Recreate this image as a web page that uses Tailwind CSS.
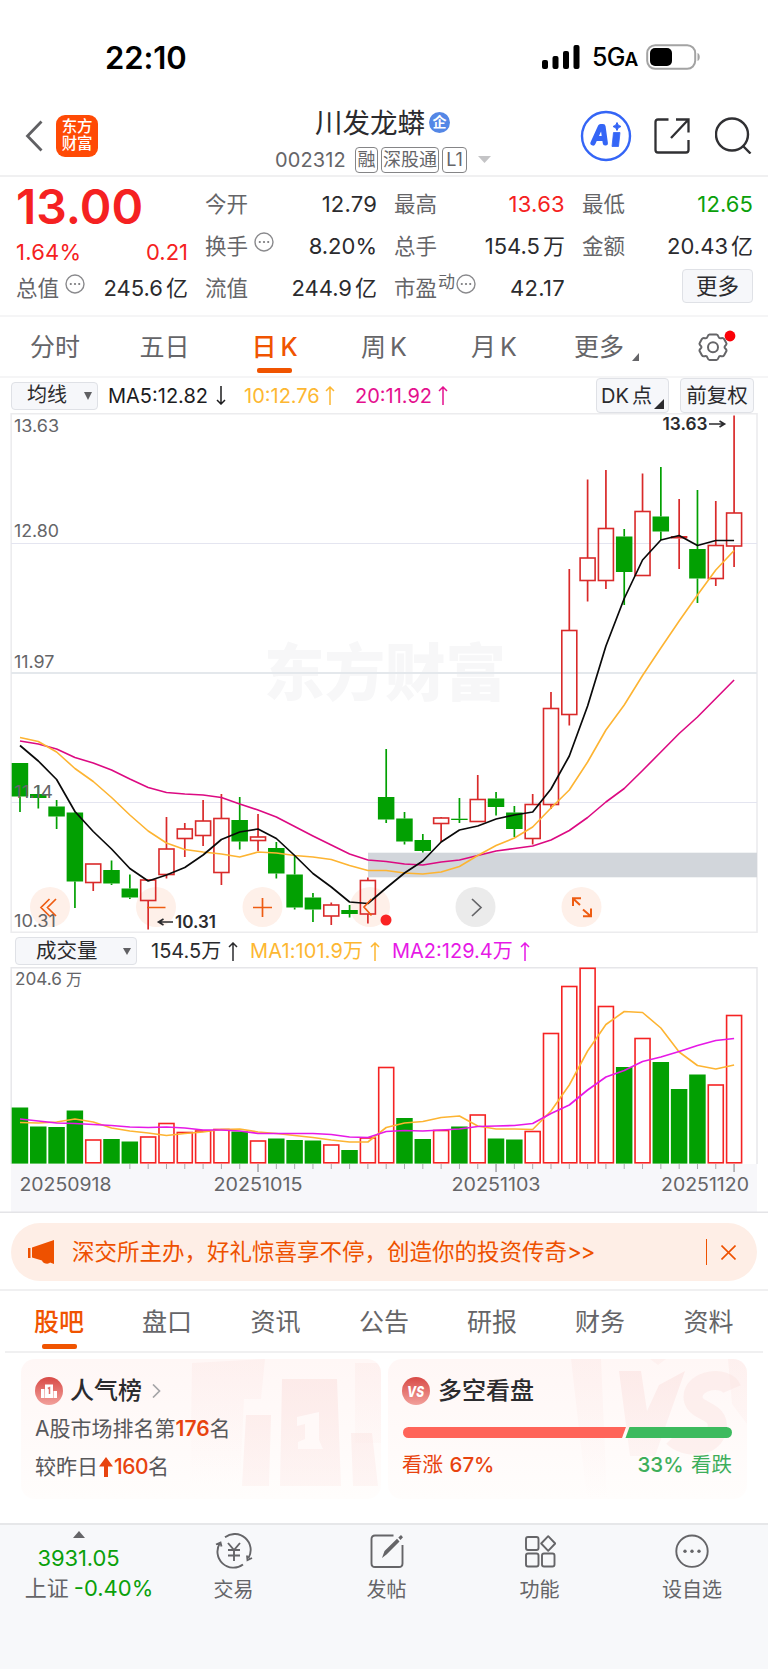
<!DOCTYPE html>
<html lang="zh-CN">
<head>
<meta charset="utf-8">
<title>川发龙蟒 002312</title>
<script src="https://cdn.jsdelivr.net/npm/@tailwindcss/browser@4"></script>
</head>
<body class="bg-white w-[768px] h-[1669px] overflow-hidden font-['Inter','Noto_Sans_CJK_SC',sans-serif] text-[#2b2b2e] whitespace-nowrap">

<!-- status bar -->
<div class="h-[94px] pt-[20px] flex items-center pl-[105px] pr-[67px] justify-between">
  <span class="text-[31px] font-semibold text-black leading-none tracking-[-0.1px]">22:10</span>
  <div class="flex items-center">
    <svg class="w-[38px] h-[24px]" viewBox="0 0 38 24"><rect x="0" y="15" width="6" height="9" rx="2"/><rect x="10.5" y="11" width="6" height="13" rx="2"/><rect x="21" y="6" width="6" height="18" rx="2"/><rect x="31.5" y="0" width="6" height="24" rx="2"/></svg>
    <span class="ml-[12px] w-[43px] text-[25px] font-medium text-black leading-none tracking-[-0.8px]">5G<span class="text-[19px] font-semibold">A</span></span>
    <svg class="ml-[11px] w-[55px] h-[26px]" viewBox="0 0 55 26"><rect x="1.2" y="1.2" width="48" height="23.6" rx="8" fill="none" stroke="#a3a3a3" stroke-width="2"/><rect x="4" y="4" width="22" height="18" rx="5"/><path d="M51.5 9v8c3-1 3-7 0-8z" fill="#a3a3a3"/></svg>
  </div>
</div>

<!-- title bar -->
<div class="h-[83px] pt-[2px] flex items-center border-b-2 border-[#f0f0f1]">
  <svg class="ml-[25px] w-[18px] h-[32px]" viewBox="0 0 18 32" fill="none" stroke="#606063" stroke-width="2.8"><path d="M16.5 1.500 2.500 16 16.500 30.500"/></svg>
  <div class="ml-[13px] w-[42px] h-[42px] rounded-[9px] bg-[#ff4a05] text-white text-[15.500px] font-medium leading-[17px] text-center pt-[3px] tracking-[-0.3px]">东方<br>财富</div>
  <div class="ml-[177px] mt-[12px] w-[217px] h-[72px] flex flex-col">
    <div class="ml-[40px] flex items-center h-[34px]">
      <span class="text-[27.500px] leading-[34px]">川发龙蟒</span>
      <span class="ml-[4px] w-[21px] h-[21px] rounded-full bg-[#5487e6] text-white text-[14px] font-bold leading-[20px] text-center">企</span>
    </div>
    <div class="flex items-center text-[#656568] mt-[6px] leading-none h-[28px]">
      <span class="text-[20px] w-[80px] tracking-[0.1px]">002312</span>
      <span class="w-[23px] h-[26px] border border-[#858587] rounded-[4px] text-[18px] leading-[23px] text-center">融</span>
      <span class="ml-[3px] w-[58px] h-[26px] border border-[#858587] rounded-[4px] text-[18px] leading-[23px] text-center">深股通</span>
      <span class="ml-[3px] w-[25px] h-[26px] border border-[#858587] rounded-[4px] text-[18px] leading-[24px] text-center">L1</span>
      <svg class="ml-[11px] w-[13px] h-[7px]" viewBox="0 0 13 7"><path d="M0 0h13L6.500 7z" fill="#c4c4c6"/></svg>
    </div>
  </div>
  <svg class="ml-[88px] w-[52px] h-[52px]" viewBox="0 0 52 52"><circle cx="26" cy="26" r="24" fill="none" stroke="#3465f6" stroke-width="2.400"/><g fill="none" stroke="#3465f6" stroke-width="5.200" stroke-linecap="round" stroke-linejoin="round"><path d="M13 33 20.500 16.500h2.500L25.300 33M17 28.500h7"/></g><path d="M33.500 22.500h6.500l-1.500 14h-6.500z" fill="#3465f6" stroke="#3465f6" stroke-width=".8" stroke-linejoin="round"/><path d="M37 12.500l1.300 2.700 2.700 1.300-2.700 1.300-1.300 2.700-1.300-2.700-2.700-1.300 2.700-1.300z" fill="#3465f6" stroke="#3465f6" stroke-width="1"/></svg>
  <svg class="ml-[22px] w-[36px] h-[36px]" viewBox="0 0 36 36" fill="none" stroke="#303033" stroke-width="2.300"><path d="M14.500 1.500H4Q1.500 1.500 1.500 4v28q0 2.500 2.500 2.500h28q2.500 0 2.500-2.500V22M17 20 34 2M22 1.500h12.500V14.500"/></svg>
  <svg class="ml-[25px] w-[37px] h-[37px]" viewBox="0 0 37 37" fill="none" stroke="#303033" stroke-width="2.400"><circle cx="17" cy="17.500" r="16"/><path d="M28 29l7.500 7.500"/></svg>
</div>

<!-- quote figures -->
<div class="h-[140px] border-b-2 border-[#f5f5f6] pl-[16px] pr-[15px] grid grid-cols-[172px_172px_171px_171px] gap-x-[17px] text-[22px] leading-[42px]">
  <div>
    <div class="h-[54px] pt-[6px] leading-[48px] text-[48px] font-semibold text-[#f52121]">13.00</div>
    <div class="flex justify-between h-[36px] leading-[43px] text-[#f52121]"><span class="tracking-[0.2px]">1.64%</span><span>0.21</span></div>
    <div class="flex justify-between"><span class="text-[#656568] flex text-[21.500px]">总值<svg class="ml-[6px] mt-[7px] w-[20px] h-[20px]" viewBox="0 0 20 20"><use href="#dots"/></svg></span><span>245.6<span class="ml-[3px]">亿</span></span></div>
  </div>
  <div class="pt-[6px]">
    <div class="flex justify-between"><span class="text-[#656568] text-[21.500px]">今开</span><span class="tracking-[0.2px]">12.79</span></div>
    <div class="flex justify-between"><span class="text-[#656568] flex text-[21.500px]">换手<svg class="ml-[6px] mt-[7px] w-[20px] h-[20px]" viewBox="0 0 20 20"><use href="#dots"/></svg></span><span>8.20%</span></div>
    <div class="flex justify-between"><span class="text-[#656568] text-[21.500px]">流值</span><span>244.9<span class="ml-[3px]">亿</span></span></div>
  </div>
  <div class="pt-[6px]">
    <div class="flex justify-between"><span class="text-[#656568] text-[21.500px]">最高</span><span class="text-[#f52121] tracking-[0.3px]">13.63</span></div>
    <div class="flex justify-between"><span class="text-[#656568] text-[21.500px]">总手</span><span>154.5<span class="ml-[3px]">万</span></span></div>
    <div class="flex justify-between"><span class="text-[#656568] flex text-[21.500px]">市盈<span class="text-[17px] leading-[30px] ml-[1px]">动</span><svg class="ml-px mt-[7px] w-[20px] h-[20px]" viewBox="0 0 20 20"><use href="#dots"/></svg></span><span class="tracking-[0.3px]">42.17</span></div>
  </div>
  <div class="pt-[6px]">
    <div class="flex justify-between"><span class="text-[#656568] text-[21.500px]">最低</span><span class="text-[#0aa00a] tracking-[0.1px]">12.65</span></div>
    <div class="flex justify-between"><span class="text-[#656568] text-[21.500px]">金额</span><span>20.43<span class="ml-[3px]">亿</span></span></div>
    <div class="flex justify-end pt-[2px]"><span class="w-[71px] h-[34px] rounded-[4px] border border-[#dfe1e6] bg-[#f6f7fa] text-center leading-[33px] text-[21.500px]">更多</span></div>
  </div>
</div>
<svg class="hidden"><defs><g id="dots"><circle cx="10" cy="10" r="9" fill="none" stroke="#8a8a8d" stroke-width="1.400"/><circle cx="5.800" cy="10" r="1.100" fill="#77777a"/><circle cx="10" cy="10" r="1.100" fill="#77777a"/><circle cx="14.200" cy="10" r="1.100" fill="#77777a"/></g></defs></svg>

<!-- period tabs -->
<div class="h-[61px] border-b-2 border-[#f5f5f6] flex text-[25px] leading-[60px] text-[#656568]">
  <span class="w-[110px] text-center">分时</span>
  <span class="w-[109px] text-center">五日</span>
  <span class="w-[111px] flex flex-col items-center text-[#f05400]"><span class="h-[51px] font-medium">日<span class="ml-1">K</span></span><span class="w-[35px] h-[5px] rounded-[2px] bg-[#f05400]"></span></span>
  <span class="w-[108px] text-center">周<span class="ml-1">K</span></span>
  <span class="w-[112px] text-center">月<span class="ml-1">K</span></span>
  <span class="w-[98px] text-center">更多</span>
  <svg class="-ml-[16px] mt-[36px] w-[7px] h-[8px]" viewBox="0 0 7 8"><path d="M7 0v8H0z" fill="#656568"/></svg>
  <svg class="ml-[59px] mt-[13px] w-[40px] h-[34px]" viewBox="0 0 40 34"><path fill="none" stroke="#656568" stroke-width="2" stroke-linejoin="round" d="M11.500 4.500h7c1.200 0 1.600 1 2 2.200s1.500 1.800 2.700 1.500c1.300-.3 2.300-.2 2.900.9l2.200 4c.6 1-.1 1.900-1 2.700-1 .9-1 1.900 0 2.800.9.800 1.600 1.700 1 2.700l-2.200 4c-.6 1.100-1.600 1.200-2.900.9-1.200-.3-2.300.3-2.700 1.500s-.8 2.200-2 2.200h-7c-1.200 0-1.600-1-2-2.200s-1.500-1.800-2.700-1.500c-1.300.3-2.300.2-2.900-.9l-2.200-4c-.6-1 .1-1.900 1-2.700 1-.9 1-1.900 0-2.800-.9-.8-1.600-1.700-1-2.700l2.200-4c.6-1.100 1.600-1.200 2.900-.9 1.200.3 2.300-.3 2.700-1.500s.8-2.200 2-2.200z"/><circle cx="15" cy="17.200" r="5" fill="none" stroke="#656568" stroke-width="2"/><circle cx="32" cy="6" r="5.400" fill="#fb0007"/></svg>
</div>

<!-- moving average legend -->
<div class="h-[35px] flex items-center pl-[11px] pr-[14px] text-[20px] leading-none">
  <div class="w-[87px] h-[28px] rounded-[4px] border border-[#dfe1e6] bg-[#f6f7fa] flex items-center pl-[15px]"><span class="leading-[24px] pb-px">均线</span><svg class="ml-[17px] w-[8px] h-[8px]" viewBox="0 0 8 8"><path d="M0 0h8L4 8z" fill="#606063"/></svg></div>
  <span class="ml-[10px] w-[108px] text-[#1c1c1e]">MA5:12.82</span><svg class="w-[10px] h-[19px]" viewBox="0 0 10 19" fill="none" stroke="#1c1c1e" stroke-width="1.500"><path d="M5 0v18M1 14l4 4 4-4"/></svg>
  <span class="ml-[18px] w-[81px] text-[#fdb732]">10:12.76</span><svg class="w-[10px] h-[19px]" viewBox="0 0 10 19" fill="none" stroke="#fdb732" stroke-width="1.500"><path d="M5 19V1M1 5l4-4 4 4"/></svg>
  <span class="ml-[20px] w-[83px] text-[#e4108e]">20:11.92</span><svg class="w-[10px] h-[19px]" viewBox="0 0 10 19" fill="none" stroke="#e4108e" stroke-width="1.500"><path d="M5 19V1M1 5l4-4 4 4"/></svg>
  <div class="ml-auto w-[73px] h-[35px] rounded-[4px] border border-[#dfe1e6] bg-[#f6f7fa] flex items-center pl-[4px]"><span class="leading-[24px]">DK<span class="ml-[3px]">点</span></span><svg class="self-end mb-[3px] ml-[2px] w-[10px] h-[10px]" viewBox="0 0 10 10"><path d="M10 0v10H0z" fill="#2b2b2e"/></svg></div>
  <div class="ml-[11px] w-[74px] h-[35px] rounded-[4px] border border-[#dfe1e6] bg-[#f6f7fa] text-center leading-[33px] text-[20.500px]">前复权</div>
</div>

<!-- candlestick chart -->
<svg id="kline" class="block w-[768px] h-[520px]" viewBox="0 413 768 520"></svg>

<!-- volume legend -->
<div class="h-[34px] flex items-center pl-[15px] text-[20px] leading-none pt-[2px]">
  <div class="w-[122px] h-[28px] rounded-[4px] border border-[#dfe1e6] bg-[#f6f7fa] flex items-center pl-[20px]"><span class="leading-[24px] pb-px text-[20.500px]">成交量</span><svg class="ml-[25px] w-[8px] h-[7px]" viewBox="0 0 8 7"><path d="M0 0h8L4 7z" fill="#606063"/></svg></div>
  <span class="ml-[14px] w-[77px]">154.5万</span><svg class="w-[10px] h-[19px]" viewBox="0 0 10 19" fill="none" stroke="#2b2b2e" stroke-width="1.500"><path d="M5 19V1M1 5l4-4 4 4"/></svg>
  <span class="ml-[12px] w-[120px] text-[#fdb732] tracking-[0.1px]">MA1:101.9万</span><svg class="w-[10px] h-[19px]" viewBox="0 0 10 19" fill="none" stroke="#fdb732" stroke-width="1.500"><path d="M5 19V1M1 5l4-4 4 4"/></svg>
  <span class="ml-[12px] w-[128px] text-[#e619e6]">MA2:129.4万</span><svg class="w-[10px] h-[19px]" viewBox="0 0 10 19" fill="none" stroke="#e619e6" stroke-width="1.500"><path d="M5 19V1M1 5l4-4 4 4"/></svg>
</div>

<!-- volume chart -->
<svg id="vol" class="block w-[768px] h-[246px]" viewBox="0 967 768 246"></svg>

<!-- notice -->
<div class="h-[78px] pt-[10px] px-[11px] border-b-2 border-[#f0f0f1]">
  <div class="h-[58px] rounded-[29px] bg-[#feeee6] flex items-center text-[#ee5100] pl-[17px] pr-[21px]">
    <svg class="w-[26px] h-[24px]" viewBox="0 0 26 24" fill="#ee5100"><path d="M0 8h2.500v10H0zM4 7.500 26 0v24l-4-1.500c-1 2-7 1.500-8-2L4 17.500z"/></svg>
    <span class="ml-[18px] text-[22.500px] leading-[30px]">深交所主办，好礼惊喜享不停，创造你的投资传奇<span class="tracking-[-1.500px]">&gt;&gt;</span></span>
    <span class="ml-auto w-px h-[26px] bg-[#ee5100]"></span>
    <svg class="ml-[14px] w-[15px] h-[15px]" viewBox="0 0 15 15" stroke="#ee5100" stroke-width="1.600"><path d="M.5.500l14 14M14.500.500l-14 14"/></svg>
  </div>
</div>

<!-- section tabs -->
<div class="mx-[5px] h-[62px] border-b-2 border-[#f0f0f1] flex text-[25px] leading-[62px] text-[#656568]">
  <span class="w-[108px] flex flex-col items-center font-medium text-[#f05400]"><span class="h-[53px]">股吧</span><span class="w-[35px] h-[5px] rounded-[2px] bg-[#f05400]"></span></span>
  <span class="w-[108px] text-center">盘口</span><span class="w-[109px] text-center">资讯</span><span class="w-[108px] text-center">公告</span><span class="w-[108px] text-center">研报</span><span class="w-[108px] text-center">财务</span><span class="w-[109px] text-center">资料</span>
</div>

<!-- cards -->
<div class="h-[170px] pt-[6px] pl-[21px] flex gap-[7px]">
  <div class="relative w-[360px] h-[140px] rounded-[14px] overflow-hidden bg-linear-to-b from-[#fff7f6] to-[#fffdfc] px-[14px]">
    <svg class="absolute inset-0 w-[360px] h-[140px]" viewBox="0 0 360 140"><defs><linearGradient id="fade" x1="0" y1="0" x2="0" y2="1"><stop offset="0" stop-color="#fbe2e0" stop-opacity=".6"/><stop offset="1" stop-color="#fbe2e0" stop-opacity=".28"/></linearGradient><linearGradient id="soft" x1="0" y1="0" x2="0" y2="1"><stop offset="0" stop-color="#fbe2e0" stop-opacity=".32"/><stop offset="1" stop-color="#fbe2e0" stop-opacity="0"/></linearGradient></defs><path fill="url(#soft)" d="M171 4l73-4-4 40h-17l-4 85h-50zM334 4h26v80h-26z"/><path fill="url(#fade)" d="M225 56h25l-2 71h-27zM261 20h55l4 107h-61zM330 74h21l6 53h-25z"/><path fill="#fff9f8" d="M276 58l22-5v28l4 9h-25v-7l7-3V65l-8 2z"/></svg>
    <div class="relative flex items-center h-[63px]">
      <svg class="w-[28px] h-[28px]" viewBox="0 0 28 28"><defs><linearGradient id="ball" x1="0" y1="0" x2="0" y2="1"><stop offset="0" stop-color="#d84a46"/><stop offset="1" stop-color="#f2a09b"/></linearGradient></defs><circle cx="14" cy="14" r="14" fill="url(#ball)"/><path fill="#fff" d="M6 12h3.500v9H6zM10 7.500h8V21h-8zM18.500 14H22v7h-3.500z"/><path d="M12.800 11.500l1.700-.8V17" stroke="#e0736d" stroke-width="1.500" fill="none"/></svg>
      <span class="ml-[7px] text-[24px] font-medium">人气榜</span>
      <svg class="ml-[10px] w-[9px] h-[14px]" viewBox="0 0 9 14" fill="none" stroke="#a5a5a8" stroke-width="1.700"><path d="M1 .5 7.500 7 1 13.500"/></svg>
    </div>
    <div class="relative text-[21px] leading-[38px] text-[#58585b] -mt-[12px]">A股市场排名第<span class="font-semibold text-[#e8430f]">176</span>名</div>
    <div class="relative text-[21px] leading-[38px] text-[#58585b] flex items-center">较昨日<svg class="mx-[1px] w-[14px] h-[20px]" viewBox="0 0 14 20" fill="#e8430f"><path d="M7 0l7 9.500H9V20H5V9.500H0z"/></svg><span class="font-medium text-[#e8430f] tracking-[-0.5px]">160</span>名</div>
  </div>
  <div class="relative w-[359px] h-[140px] rounded-[14px] overflow-hidden bg-linear-to-b from-[#fff7f6] to-[#fffdfc] px-[14px]">
    <svg class="absolute inset-0 w-[359px] h-[140px]" viewBox="0 0 359 140"><path fill="url(#soft)" d="M183 0h30l6 140h-20zM262 0h16l-8 6zM340 0h19v65l-15-20z"/><path fill="url(#fade)" d="M231 12h22l6 40 12-26 26-14-30 85h-25z"/><path fill="none" stroke="#fbe2e0" stroke-opacity=".45" stroke-width="19" d="M344 30c-6-14-39-10-39 8 0 16 28 12 24 32-3 20-32 20-44 8"/></svg>
    <div class="relative flex items-center h-[63px]">
      <svg class="w-[28px] h-[28px]" viewBox="0 0 28 28"><circle cx="14" cy="14" r="14" fill="url(#ball)"/><text x="13.500" y="19.500" text-anchor="middle" font-size="15" font-weight="800" font-style="italic" fill="#fff" textLength="17" lengthAdjust="spacingAndGlyphs">VS</text></svg>
      <span class="ml-[8px] text-[24px] font-medium">多空看盘</span>
    </div>
    <svg class="relative block mt-[5px] ml-px w-[329px] h-[11px]" viewBox="0 0 329 11"><path fill="#ff6459" d="M5.500 0H223l-4 11H5.500a5.500 5.500 0 0 1 0-11z"/><path fill="#3dba5e" d="M226.500 0h97a5.500 5.500 0 0 1 0 11h-101z"/></svg>
    <div class="relative flex justify-between pr-[1px] text-[20.500px] leading-[30px] mt-[12px] font-medium"><span class="text-[#e8430f]"><span class="font-normal">看涨</span> <span class="ml-[1px]">67%</span></span><span class="text-[#3dae5a]"><span class="mr-[2px]">33%</span> <span class="font-normal">看跌</span></span></div>
  </div>
</div>

<!-- bottom bar -->
<div class="h-[146px] border-t-2 border-[#e6e7e9] bg-[#f7f8fa] flex text-[20px] text-[#656568]">
  <div class="w-[157px] flex flex-col items-center pt-[6px]">
    <svg class="w-[12px] h-[7px]" viewBox="0 0 12 7"><path d="M6 0l6 7H0z" fill="#656568"/></svg>
    <span class="mt-[5px] text-[22px] leading-[30px] text-[#0aa00a] tracking-[-0.1px]">3931.05</span>
    <span class="ml-[21px] leading-[30px] text-[22px]">上证<span class="ml-[5px] text-[#0aa00a]">-0.40%</span></span>
  </div>
  <div class="w-[153px] flex flex-col items-center pt-[8px]">
    <svg class="w-[38px] h-[36px]" viewBox="0 0 38 36" fill="none" stroke="#656568" stroke-width="1.900"><path d="M10 4.200A16 16 0 0 1 33.500 25M28 31.500A16 16 0 0 1 5 10M1 11.500l4.500-2 1 4M37 25l-4.500 2-.5-4.500M13 10l6 7 6-7M19 17v11M13 17h12M13 22.500h12"/></svg>
    <span class="mt-[6px] leading-[30px]">交易</span>
  </div>
  <div class="w-[153px] flex flex-col items-center pt-[8px]">
    <svg class="w-[34px] h-[36px]" viewBox="0 0 34 36" fill="none" stroke="#656568" stroke-width="1.900"><path d="M23.500 2.500H5Q1.500 2.500 1.500 6v24.500Q1.500 34 5 34h24q3.500 0 3.500-3.500V12"/><path fill="#656568" stroke="none" d="M12 25l2.500-7L27 5.800l2.500 2.600L16.500 21.500zM28.300 4.500 31 2l2 2.200-2.500 2.800z"/></svg>
    <span class="mt-[6px] leading-[30px]">发帖</span>
  </div>
  <div class="w-[153px] flex flex-col items-center pt-[8px]">
    <svg class="w-[32px] h-[36px]" viewBox="0 0 32 36" fill="none" stroke="#656568" stroke-width="1.900"><rect x="2" y="4" width="12.500" height="13" rx="2"/><rect x="2" y="20.500" width="12.500" height="13" rx="2"/><rect x="18" y="20.500" width="12.500" height="13" rx="2"/><path stroke-linejoin="round" d="M24.200 3.200l7 7.300-7 7.300-7-7.300z"/></svg>
    <span class="mt-[6px] leading-[30px]">功能</span>
  </div>
  <div class="w-[152px] flex flex-col items-center pt-[8px]">
    <svg class="w-[34px] h-[36px]" viewBox="0 0 34 36"><circle cx="17" cy="18.200" r="15.700" fill="none" stroke="#656568" stroke-width="1.900"/><g fill="#656568"><circle cx="10" cy="18.200" r="1.700"/><circle cx="17" cy="18.200" r="1.700"/><circle cx="24" cy="18.200" r="1.700"/></g></svg>
    <span class="mt-[6px] leading-[30px]">设自选</span>
  </div>
</div>

<script>
const X = i => +(20 + i * 18.31).toFixed(2);
const RED = '#d92a2a', GREEN = '#02a002';
// direction, body top, body bottom, high, low (chart units)
const K = [['g',763,796.5,763,812],['g',794,798,785,808.5],['g',806.5,816.5,800,829],['g',812.5,881.5,812,908],['r',864,882.5,864,891],['g',870,883.5,860.5,885],['g',888.5,897.5,874.5,899],['r',880,900.5,880,929.5],['r',849,874.5,817,878.5],['r',829,838.5,823,857],['r',821,835.5,800,846],['r',818.5,872.5,794,885],['g',820,841.5,797,849.5],['r',837,840.5,814,851],['g',848,873.5,842,878.5],['g',874.5,907.5,856,909.5],['g',897.5,909.5,893,922],['r',905,916,902.5,925],['g',910,914,905,917.5],['r',880.5,914,877.5,923.5],['g',797,819.5,749,823],['g',818.5,841.5,812,844.5],['g',840,851,834,852.5],['r',818,823.5,817,842],['g',818.7,820,798,823],['r',799.5,821.5,775,822],['g',798.5,807,792,815.5],['g',812.5,829,806,837],['r',804.5,838.5,794,844.5],['r',708.5,804.5,692,809],['r',630.5,714.5,569,725.5],['r',558,580.5,479.5,601.5],['r',528.5,580.5,470,589],['g',536.5,572,529,605],['r',511.5,575.5,473.5,576],['g',516.5,531.5,467,540],['r',536,538.5,499,569],['g',549,578.5,490,603],['r',545.5,578.5,501,586],['r',513,546,415.5,567]];
const MA5=[745.5,761,779.5,811.5,831.5,849,868.5,881,875,867.5,855,839.5,832,829,838.5,855.5,873.5,887,902,903.5,888,873,861,842,830,826,819,815,812,789,756,706,646,598.5,560,540,535.5,545.5,540.5,540.5];
const MA10=[737.5,741.5,752,768.5,781.5,797.5,815,831,843,849.5,852,854,857,852,853,855.5,857,859.5,865.5,870.5,870.5,873,874,872,866.5,855.5,845.5,838,827,808,790,762,730,705,675.5,648,621,595,570,550.5];
const MA20=[741,744,749,757.5,763,770,779,787.5,792.5,794,795,797.5,804,810,817,826.5,836,845,854,860,861.5,864,865,862,860,855.5,851,848.5,846,840,830.5,817.5,802,788.5,770.5,752,733.5,717,698.5,680];
const V=[1107.5,1126.5,1127,1110.5,1140,1139,1141.5,1137,1123.5,1132.5,1131,1129.5,1131.5,1141,1138.5,1140,1140.5,1145,1150,1138,1067.5,1118,1139,1130.5,1126.5,1115,1138.5,1139.5,1131.5,1033.5,986.5,968.3,1006.5,1067,1038.5,1062,1089,1074.5,1085,1015.5];
const V1=[1122.5,1123,1122,1119,1122,1128,1131,1133,1135.5,1133.5,1132,1129.5,1129,1132,1133.5,1135.5,1137.5,1140,1142,1142,1127.5,1123,1121.5,1117.5,1116,1126,1129,1129,1129.5,1111,1085,1051,1024.5,1011.5,1012.5,1028,1052,1065.5,1069,1065];
const V2=[1119,1121,1123,1123.5,1124.5,1125.5,1127,1127.5,1127,1128,1130,1130,1131,1133.5,1133.5,1133.5,1133.5,1134.5,1137,1137.5,1131.5,1130.5,1131,1130,1129,1126.5,1126,1125.5,1123.5,1113.5,1105,1090,1077,1070.5,1061.5,1057,1051.5,1045.5,1040.5,1038.5];
const line = (a, c, w) => `<polyline fill="none" stroke="${c}" stroke-width="${w}" stroke-linejoin="round" points="${a.map((y, i) => X(i) + ',' + y).join(' ')}"/>`;
const text = (x, y, w, s, t, extra = '') => `<text x="${x}" y="${y}" font-size="${s}" textLength="${w}" lengthAdjust="spacingAndGlyphs" fill="#656568" ${extra}>${t}</text>`;
const seg = (d, c, w) => `<path d="${d}" fill="none" stroke="${c}" stroke-width="${w}"/>`;

let k = seg('M11 413.700H757.500M11 932.400H757.500M11.200 413V933M757 413V933', '#ececee', 1.6);
k += text(264, 696, 242, 62, '东方财富', 'font-weight="900" style="fill:#f7f7f8"');
k += seg('M11 543.500H757M11 802.500H757', '#e4e5f0', 1.2) + seg('M11 673H757', '#e4e8ec', 1.8);
k += `<rect x="368" y="852.700" width="389" height="24.600" fill="#d2d6db"/>`;
[50, 156, 262.5, 370, 475.5, 581.5].forEach((x, i) => k += `<circle cx="${x}" cy="907" r="20" fill="${i === 4 ? '#ebebeb' : '#fef0e9'}"/>`);
K.forEach(([d, t, b, h, l], i) => {
  const x = X(i), c = d === 'g' ? GREEN : RED;
  k += seg(`M${x} ${h}V${t}M${x} ${b}V${l}`, c, 1.7);
  if (d === 'g' || i === 36) k += `<rect x="${x - 8.3}" y="${t}" width="16.500" height="${b - t}" fill="${c}"/>`;
  else k += `<rect x="${x - 7.5}" y="${t}" width="15" height="${b - t}" fill="none" stroke="${c}" stroke-width="1.600"/>`;
});
k += line(MA20, '#dc0a82', 1.6) + line(MA10, '#fdb432', 1.6) + line(MA5, '#0a0a0a', 1.7);
[['13.63', 432], ['12.80', 537], ['11.97', 667.5], ['11.14', 797.5], ['10.31', 927]].forEach(([t, y]) => k += text(14, y, t[1] === '1' ? (t === '11.14' ? 39 : 40.500) : t === '10.31' ? 42 : 45, 17, t));
k += text(662.5, 430, 45, 17, '13.63', 'font-weight="600" style="fill:#2b2b2e"') + seg('M709 424H724M719.500 421L724.500 424 719.500 427', '#2b2b2e', 1.7);
k += text(175, 928, 41, 17, '10.31', 'font-weight="600" style="fill:#2b2b2e"') + seg('M173 922H159M163.500 919L158.500 922 163.500 925', '#2b2b2e', 1.7);
k += seg('M49.500 899L41 907.500 49.500 916M56 899L47.500 907.500 56 916M147 907.500H165.500M253 907.500H272M262.500 898V917M371.500 899L364 907 371.500 915.500', '#ee5c12', 1.7);
k += seg('M472 899L481 907.500 472 916', '#656568', 1.7);
k += seg('M580 905L573 898.500M573 906V898.300H581M583 909.500L590.500 916M591 908.500V916.300H583', '#ee5c12', 2);
k += `<circle cx="386" cy="920" r="5.500" fill="#fa2323"/>`;
document.getElementById('kline').innerHTML = k;

let v = `<rect x="11" y="1164" width="746" height="49" fill="#f7f7fa"/>`;
v += seg('M11 967.700H757.500M11.200 967V1164M757 967V1164', '#e6e6e9', 1.4) + seg('M0 1212.300H768', '#e4e4e7', 1.5);
v += text(15, 984.5, 47, 17, '204.6') + text(66, 985, 16, 16, '万');
V.forEach((t, i) => {
  const x = X(i), solid = i !== 20 && (K[i][0] === 'g' || i === 36);
  v += solid ? `<rect x="${x - 8.3}" y="${t}" width="16.500" height="${1163.6 - t}" fill="${GREEN}"/>`
    : `<rect x="${x - 7.5}" y="${t}" width="15" height="${1162.8 - t}" fill="none" stroke="#f52323" stroke-width="1.600"/>`;
  if (i > 5) v += seg(`M${x} 1164V${i % 13 ? 1169 : 1172}`, '#a9a9ad', i % 13 ? 1 : 1.6);
});
v += line(V1, '#fdb432', 1.6) + line(V2, '#e619e6', 1.7);
[[19.5, 92, '20250918'], [213.5, 89, '20251015'], [451.5, 89, '20251103'], [661, 88, '20251120']].forEach(([x, w, t]) => v += text(x, 1191, w, 18.5, t));
document.getElementById('vol').innerHTML = v;
</script>
</body>
</html>
